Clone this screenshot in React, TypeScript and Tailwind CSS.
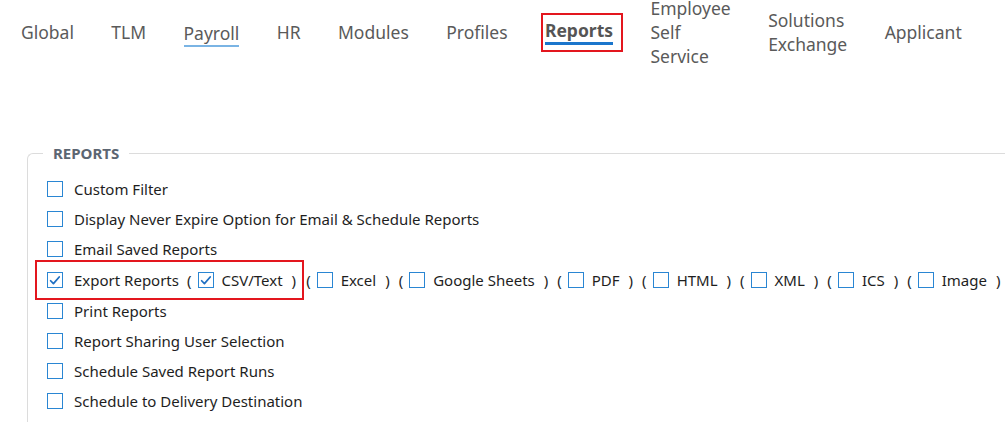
import type { ReactNode } from 'react'

const FONT = "font-['Noto_Sans','Open_Sans',sans-serif]"

const TABS = [
  { label: 'Global' },
  { label: 'TLM' },
  { label: 'Payroll', underline: 'light' },
  { label: 'HR' },
  { label: 'Modules' },
  { label: 'Profiles' },
  { label: 'Reports', active: true },
  { label: 'Employee Self Service' },
  { label: 'Solutions Exchange' },
  { label: 'Applicant' },
] as const

const PERMISSIONS = [
  'Custom Filter',
  'Display Never Expire Option for Email & Schedule Reports',
  'Email Saved Reports',
  'export',
  'Print Reports',
  'Report Sharing User Selection',
  'Schedule Saved Report Runs',
  'Schedule to Delivery Destination',
]

const FORMATS = ['Excel', 'Google Sheets', 'PDF', 'HTML', 'XML', 'ICS', 'Image']

function Box({ checked = false, className = '' }: { checked?: boolean; className?: string }) {
  return (
    <span
      className={`inline-flex size-[16px] shrink-0 items-center justify-center border-[1.5px] border-[#2a86d3] bg-white ${className}`}
    >
      {checked && (
        <svg viewBox="0 0 16 16" className="size-[15px]" fill="none" aria-hidden>
          <path d="M3 8.3l3.2 3.3L12.8 4" stroke="#1f6fc2" strokeWidth="2" strokeLinecap="round" strokeLinejoin="round" />
        </svg>
      )}
    </span>
  )
}

function Flagged({ children, className = '' }: { children: ReactNode; className?: string }) {
  return <span className={`border-2 border-[#e3161e] ${className}`}>{children}</span>
}

function Format({ label, checked = false, lead = 'ml-[8px]' }: { label: string; checked?: boolean; lead?: string }) {
  return (
    <>
      <span className={lead}>(</span>
      <Box checked={checked} className="ml-[6px]" />
      <span className="ml-[8px]">{label}</span>
      <span className="ml-[9px]">)</span>
    </>
  )
}

function TabBar() {
  return (
    <nav className="flex h-[64px] items-center gap-[37.4px] pl-[21px] text-[17.5px] leading-[24px] text-[#5a5a5a]">
      {TABS.map((tab) => {
        if ('active' in tab) {
          return (
            <Flagged key={tab.label} className="-ml-[4px] -mr-[10px] pb-[5px] pl-[2px] pr-[8px] pt-[4px]">
              <span className="block border-b-[3px] border-[#1b76cc] font-bold leading-[23px] text-[#555]">
                {tab.label}
              </span>
            </Flagged>
          )
        }
        return (
          <span
            key={tab.label}
            className={`w-min ${'underline' in tab ? 'border-b-2 border-[#7ab4e4] pt-[3px]' : ''}`}
          >
            {tab.label}
          </span>
        )
      })}
    </nav>
  )
}

export default function App() {
  return (
    <div className={`h-[422px] w-[1005px] overflow-hidden bg-white ${FONT}`}>
      <TabBar />

      <fieldset className="ml-[27px] mt-[79px] rounded-tl-[6px] border-l border-t border-[#dcdcdc] pb-[40px] pl-[19px] pt-[11px]">
        <legend className="-ml-[4px] px-[10px] text-[15px] font-bold leading-[20px] text-[#5c6672]">REPORTS</legend>

        <div className="flex flex-col text-[15px] text-[#1e1e1e]">
          {PERMISSIONS.map((item) =>
            item === 'export' ? (
              <div key={item} className="flex h-[32px] items-center whitespace-nowrap">
                <Flagged className="-ml-[12px] inline-flex h-[40px] items-center pl-[10px] pr-[6px]">
                  <Box checked />
                  <span className="ml-[11px]">Export Reports</span>
                  <Format label="CSV/Text" checked />
                </Flagged>
                {FORMATS.map((f, i) => (
                  <Format key={f} label={f} lead={i === 0 ? 'ml-[2px]' : 'ml-[9px]'} />
                ))}
              </div>
            ) : (
              <div key={item} className="flex h-[30px] items-center">
                <Box />
                <span className="ml-[11px]">{item}</span>
              </div>
            ),
          )}
        </div>
      </fieldset>
    </div>
  )
}
